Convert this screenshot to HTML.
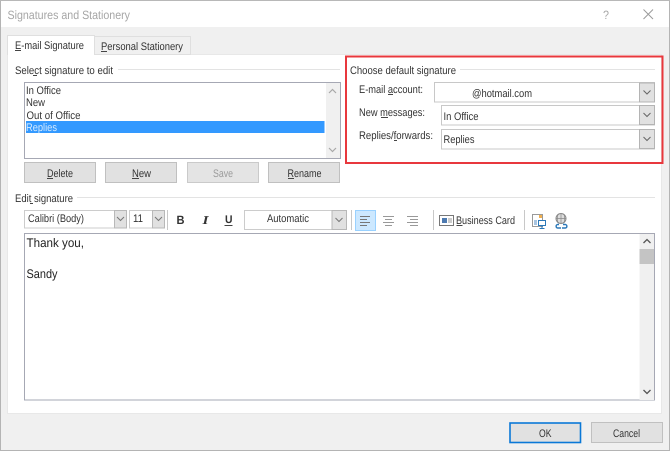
<!DOCTYPE html>
<html><head><meta charset="utf-8">
<style>
html,body{margin:0;padding:0;background:#f0f0f0;width:670px;height:451px;overflow:hidden}
svg{display:block}
text{font-family:"Liberation Sans",sans-serif;font-size:11px;fill:#333;text-rendering:geometricPrecision}
.b{filter:blur(.35px)}
</style></head><body>
<svg width="670" height="451" viewBox="0 0 670 451" xmlns="http://www.w3.org/2000/svg">
<defs>
<g id="dn"><rect x=".5" y=".5" width="15" height="19" fill="#e1e1e1" stroke="#b4b4b4"/><path d="M4.500 8l3.500 3.500 3.500-3.500" fill="none" stroke="#666" stroke-width="1"/></g>
</defs>
<rect width="670" height="451" fill="#f0f0f0"/>
<rect width="670" height="27" fill="#fff"/>
<rect x="0" y="0" width="1" height="451" fill="#b4b4b4"/>
<rect x="669" y="0" width="1" height="451" fill="#b4b4b4"/>
<rect x="0" y="450" width="670" height="1" fill="#b4b4b4"/>
<rect x="0" y="0" width="670" height="1" fill="#b8b8b8"/>
<g class="b">
<text x="7.500" y="19" textLength="122.500" lengthAdjust="spacingAndGlyphs" style="font-size:12px;fill:#a6a6a6">Signatures and Stationery</text>
<text x="603" y="19" textLength="6" lengthAdjust="spacingAndGlyphs" style="font-size:12px;fill:#a6a6a6">?</text>
<path d="M643.500 9.500l9.500 9.500M653 9.500l-9.500 9.500" stroke="#9a9a9a" stroke-width="1" fill="none"/>

<!-- tab panel -->
<rect x="7.500" y="54.500" width="654" height="359" fill="#fff" stroke="#e8e8e8"/>
<rect x="94.500" y="36.500" width="96" height="18" fill="#f0f0f0" stroke="#dfdfdf"/>
<rect x="7.500" y="35.500" width="87" height="19" fill="#fff" stroke="#dfdfdf"/>
<rect x="8" y="53" width="86" height="3" fill="#fff"/>
<text x="15" y="49" textLength="69" lengthAdjust="spacingAndGlyphs">E-mail Signature</text>
<rect x="15" y="50" width="6" height="1" fill="#444"/>
<text x="101" y="50" textLength="82" lengthAdjust="spacingAndGlyphs">Personal Stationery</text>
<rect x="101" y="51" width="6" height="1" fill="#444"/>

<text x="15" y="74" textLength="98" lengthAdjust="spacingAndGlyphs">Select signature to edit</text>
<rect x="33" y="75" width="4" height="1" fill="#444"/>
<rect x="118" y="69" width="222" height="1" fill="#e3e3e3"/>

<!-- list -->
<rect x="24.500" y="82.500" width="316" height="76" fill="#fff" stroke="#a6a8b4"/>
<rect x="326" y="83" width="14" height="75" fill="#f0f0f0"/>
<path d="M329 93l3.500-3.500 3.500 3.500M329 148l3.500 3.500 3.500-3.500" fill="none" stroke="#a8a8a8" stroke-width="1.200"/>
<rect x="26" y="121" width="298.500" height="12" fill="#3399ff"/>
<text x="26" y="94" textLength="35" lengthAdjust="spacingAndGlyphs">In Office</text>
<text x="26" y="106" textLength="19" lengthAdjust="spacingAndGlyphs">New</text>
<text x="26.500" y="119" textLength="54" lengthAdjust="spacingAndGlyphs">Out of Office</text>
<text x="26" y="131" textLength="31" lengthAdjust="spacingAndGlyphs" style="fill:#d6ebff">Replies</text>

<!-- buttons -->
<rect x="24.500" y="162.500" width="71" height="20" fill="#e1e1e1" stroke="#c0c0c0"/>
<rect x="105.500" y="162.500" width="71" height="20" fill="#e1e1e1" stroke="#c0c0c0"/>
<rect x="187.500" y="162.500" width="71" height="20" fill="#e4e4e4" stroke="#cacaca"/>
<rect x="268.500" y="162.500" width="71" height="20" fill="#e1e1e1" stroke="#c0c0c0"/>
<text x="47" y="177" textLength="26" lengthAdjust="spacingAndGlyphs">Delete</text>
<rect x="47" y="178" width="6" height="1" fill="#444"/>
<text x="132" y="177" textLength="19" lengthAdjust="spacingAndGlyphs">New</text>
<rect x="132" y="178" width="7" height="1" fill="#444"/>
<text x="213" y="177" textLength="20" lengthAdjust="spacingAndGlyphs" style="fill:#9a9a9a">Save</text>
<text x="287.500" y="177" textLength="34" lengthAdjust="spacingAndGlyphs">Rename</text>
<rect x="288" y="178" width="6" height="1" fill="#444"/>

<!-- right group -->
<text x="350" y="74" textLength="106" lengthAdjust="spacingAndGlyphs">Choose default signature</text>
<rect x="460" y="69" width="195" height="1" fill="#e3e3e3"/>
<text x="359" y="93" textLength="64" lengthAdjust="spacingAndGlyphs">E-mail account:</text>
<rect x="388" y="94" width="5" height="1" fill="#444"/>
<text x="359" y="116" textLength="66" lengthAdjust="spacingAndGlyphs">New messages:</text>
<rect x="381" y="117" width="7" height="1" fill="#444"/>
<text x="359" y="139" textLength="74" lengthAdjust="spacingAndGlyphs">Replies/forwards:</text>
<rect x="394" y="140" width="3" height="1" fill="#444"/>

<rect x="434.500" y="82.500" width="220" height="19.500" fill="#fff" stroke="#c8c8c8"/>
<use href="#dn" x="639" y="82.500"/>
<rect x="441.500" y="105.500" width="213" height="19.500" fill="#fff" stroke="#c8c8c8"/>
<use href="#dn" x="639" y="105"/>
<rect x="441.500" y="129.500" width="213" height="19.500" fill="#fff" stroke="#c8c8c8"/>
<use href="#dn" x="639" y="129"/>
<text x="472" y="97" textLength="60" lengthAdjust="spacingAndGlyphs">@hotmail.com</text>
<text x="443.500" y="120" textLength="35" lengthAdjust="spacingAndGlyphs">In Office</text>
<text x="443.500" y="143" textLength="31" lengthAdjust="spacingAndGlyphs">Replies</text>

<!-- edit signature -->
<text x="15" y="202" textLength="58" lengthAdjust="spacingAndGlyphs">Edit signature</text>
<rect x="30" y="203" width="3" height="1" fill="#444"/>
<rect x="77" y="197" width="578" height="1" fill="#e3e3e3"/>

<!-- toolbar -->
<rect x="24.500" y="210.500" width="102" height="17.500" fill="#fff" stroke="#cccccc"/>
<rect x="114.500" y="210.500" width="12" height="17.500" fill="#e1e1e1" stroke="#b8b8b8"/>
<path d="M117 217l3.500 3.500 3.500-3.500" fill="none" stroke="#777"/>
<text x="28" y="222" textLength="56" lengthAdjust="spacingAndGlyphs">Calibri (Body)</text>
<rect x="129.500" y="210.500" width="35" height="17.500" fill="#fff" stroke="#cccccc"/>
<rect x="152.500" y="210.500" width="12" height="17.500" fill="#e1e1e1" stroke="#b8b8b8"/>
<path d="M155 217l3.500 3.500 3.500-3.500" fill="none" stroke="#777"/>
<text x="133" y="222" textLength="10" lengthAdjust="spacingAndGlyphs">11</text>
<rect x="167" y="210" width="1" height="20" fill="#c8c8c8"/>
<text x="176.500" y="224" textLength="8" lengthAdjust="spacingAndGlyphs" style="font-size:12px;font-weight:bold">B</text>
<text x="202.500" y="224" textLength="6" lengthAdjust="spacingAndGlyphs" style="font-size:12px;font-weight:bold;font-style:italic;font-family:'Liberation Serif',serif">I</text>
<text x="225" y="223" textLength="7.500" lengthAdjust="spacingAndGlyphs" style="font-size:11px;font-weight:bold">U</text>
<rect x="224.500" y="225" width="8" height="1" fill="#444"/>
<rect x="244.500" y="210.500" width="102" height="19" fill="#fff" stroke="#cccccc"/>
<rect x="332" y="210.500" width="14.500" height="19" fill="#e1e1e1" stroke="#b8b8b8"/>
<path d="M335.500 218l3.500 3.500 3.500-3.500" fill="none" stroke="#777"/>
<text x="267" y="222" textLength="42" lengthAdjust="spacingAndGlyphs">Automatic</text>
<rect x="351" y="210" width="1" height="20" fill="#c8c8c8"/>
<rect x="355.500" y="210.500" width="20" height="20" fill="#cce8ff" stroke="#99d1ff"/>
<path d="M360 216.500h10M360 219.500h7M360 222.500h10M360 225.500h7" stroke="#777" stroke-width="1"/>
<path d="M383 216.500h11M385 219.500h7M383 222.500h11M385 225.500h7" stroke="#999" stroke-width="1"/>
<path d="M407 216.500h11M410 219.500h8M407 222.500h11M410 225.500h8" stroke="#999" stroke-width="1"/>
<rect x="433" y="210" width="1" height="20" fill="#c8c8c8"/>
<rect x="439.500" y="215.500" width="14" height="10" fill="#fff" stroke="#777"/>
<rect x="442" y="218" width="5" height="5" fill="#4d7ab0"/>
<rect x="448" y="218" width="4" height="5" fill="#ccc"/>
<text x="456" y="224" textLength="59" lengthAdjust="spacingAndGlyphs">Business Card</text>
<rect x="456.500" y="225" width="6" height="1" fill="#444"/>
<rect x="524" y="210" width="1" height="20" fill="#c8c8c8"/>
<rect x="532.500" y="214.500" width="10" height="12" fill="#fff" stroke="#999"/>
<rect x="539" y="215" width="3" height="3" fill="#f0b050"/>
<rect x="534" y="220" width="3" height="5" fill="#a8c4e0"/>
<rect x="538.500" y="220.500" width="7" height="5" fill="#fff" stroke="#2b78b8"/>
<path d="M542 226v2M539.500 228.500h5" stroke="#2b78b8"/>
<circle cx="561" cy="218.500" r="5" fill="#ddd" stroke="#888"/>
<path d="M556 218.500h10M561 213.500v10M558 214.500q-1.500 4 0 8M564 214.500q1.500 4 0 8" stroke="#888" stroke-width=".7" fill="none"/>
<path d="M559 224.500h-1.500a1.800 1.800 0 0 0 0 3.500h3.500M563 224.500h2.500a1.800 1.800 0 0 1 0 3.500h-3.500" stroke="#2b78b8" stroke-width="1.400" fill="none"/>

<!-- editor -->
<rect x="24.500" y="233.500" width="630" height="166.500" fill="#fff" stroke="#a6a8b4"/>
<rect x="639.500" y="234" width="14.500" height="166" fill="#f0f0f0"/>
<rect x="639.500" y="249" width="14.500" height="15" fill="#c4c4c4"/>
<path d="M643.500 243l3.500-3.500 3.500 3.500M643.500 390l3.500 3.500 3.500-3.500" fill="none" stroke="#555" stroke-width="1.300"/>
<text x="26.500" y="247" textLength="57.500" lengthAdjust="spacingAndGlyphs" style="font-size:12.500px;fill:#222">Thank you,</text>
<text x="26.500" y="278" textLength="31" lengthAdjust="spacingAndGlyphs" style="font-size:12.500px;fill:#222">Sandy</text>

<!-- OK / Cancel -->
<rect x="510" y="423" width="70.500" height="19.500" fill="#e1e1e1" stroke="#0a78d7" stroke-width="1.600"/>
<rect x="591.500" y="422.500" width="71" height="20" fill="#e1e1e1" stroke="#c0c0c0"/>
<text x="539" y="437" textLength="12.500" lengthAdjust="spacingAndGlyphs">OK</text>
<text x="613" y="437" textLength="27" lengthAdjust="spacingAndGlyphs">Cancel</text>

<!-- red box -->
<rect x="346" y="56.500" width="316.500" height="106.500" fill="none" stroke="#e8383d" stroke-width="2"/>
</g>
</svg>
</body></html>
